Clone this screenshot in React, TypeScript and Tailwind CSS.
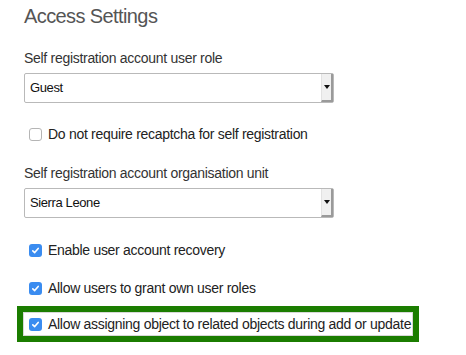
import React from "react";

const font = { fontFamily: "'Liberation Sans', Arial, sans-serif" };

const Casilla = ({ checked }: { checked: boolean }) =>
  checked ? (
    <span className="flex h-[13px] w-[13px] shrink-0 items-center justify-center rounded-[3px] bg-[#3a8cf0]">
      <svg width="9" height="9" viewBox="0 0 9 9">
        <path d="M1.8 4.8 L3.7 6.6 L7.2 2.4" fill="none" stroke="#fff" strokeWidth="1.6" strokeLinecap="round" strokeLinejoin="round" />
      </svg>
    </span>
  ) : (
    <span className="block h-[13px] w-[13px] shrink-0 rounded-[3px] border border-[#b5b5b5] bg-white" />
  );

const Fila = ({ checked, label }: { checked: boolean; label: string }) => (
  <div className="flex h-[20px] items-center pl-[5px] text-[14px] tracking-[-0.021em] text-[#222]">
    <Casilla checked={checked} />
    <span className="ml-[6px] whitespace-nowrap">{label}</span>
  </div>
);

const Selector = ({ value }: { value: string }) => (
  <div className="flex h-[30px] w-[310px] items-stretch rounded-[2px] border border-[#b9b9b9] bg-white">
    <div className="flex flex-1 items-center pl-[5px] text-[13px] tracking-[-0.03em] text-[#111]">{value}</div>
    <div className="flex w-[12px] items-center justify-center border-b-2 border-r-2 border-l border-b-[#9a9a9a] border-r-[#9a9a9a] border-l-[#e2e2e2] bg-[#f0f0f0]">
      <svg width="6" height="4" viewBox="0 0 6 4">
        <path d="M0 0 H6 L3 4 Z" fill="#111" />
      </svg>
    </div>
  </div>
);

export default function App() {
  return (
    <div className="h-[355px] w-[466px] overflow-hidden bg-white px-6 pt-[2px]" style={font}>
      <h2 className="text-[20px] leading-[28px] tracking-[-0.03em] text-[#555]">Access Settings</h2>

      <div className="mt-[18px] text-[14px] leading-[20px] tracking-[-0.021em] text-[#333]">Self registration account user role</div>
      <div className="mt-[5px]">
        <Selector value="Guest" />
      </div>

      <div className="mt-[21px]">
        <Fila checked={false} label="Do not require recaptcha for self registration" />
      </div>

      <div className="mt-[19px] text-[14px] leading-[20px] tracking-[-0.021em] text-[#333]">Self registration account organisation unit</div>
      <div className="mt-[5px]">
        <Selector value="Sierra Leone" />
      </div>

      <div className="mt-[22px]">
        <Fila checked={true} label="Enable user account recovery" />
      </div>
      <div className="mt-[18px]">
        <Fila checked={true} label="Allow users to grant own user roles" />
      </div>

      <div className="ml-[-7px] mt-[8px] w-fit border-[6px] border-[#1b7d00]">
        <div className="border border-[#d8d8d8] py-[1px] pr-[1px]">
          <Fila checked={true} label="Allow assigning object to related objects during add or update" />
        </div>
      </div>
    </div>
  );
}
